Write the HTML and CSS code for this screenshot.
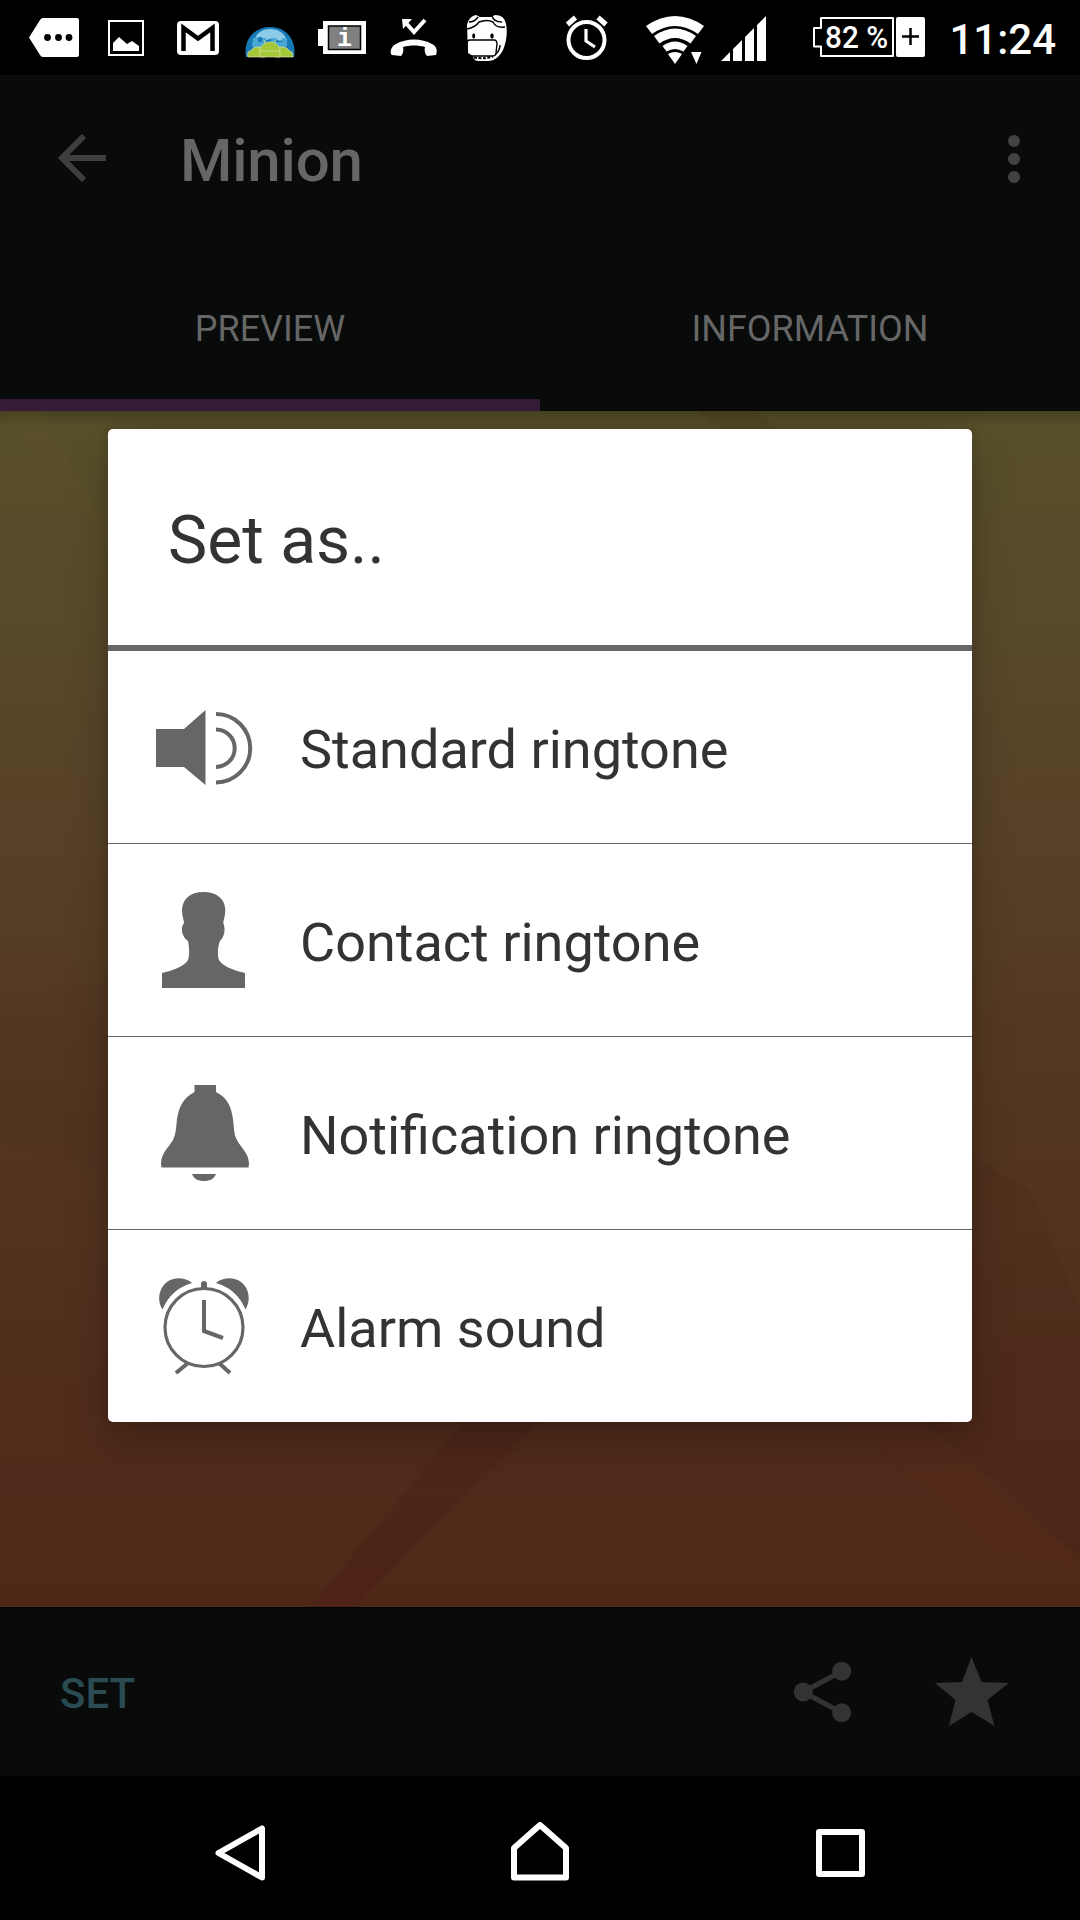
FILE: index.html
```html
<!DOCTYPE html>
<html lang="en">
<head>
    <meta charset="UTF-8">
    <meta name="viewport" content="width=device-width, initial-scale=1.0">
    <title>Minion</title>
    <link rel="stylesheet" href="styles.css">
</head>
<body>
    <div class="status-bar">
        <div class="notifications">
            <svg class="status-icon" viewBox="0 0 72 75">
                <path fill="#fff" d="M11 37.500 22 20q1-2 3-2h34q2 0 2 2v35q0 2-2 2H25q-2 0-3-2z"/>
                <circle cx="29.500" cy="37.500" r="3.400"/><circle cx="40.500" cy="37.500" r="3.400"/><circle cx="51" cy="37.500" r="3.400"/>
            </svg>
            <svg class="status-icon" viewBox="0 0 72 75">
                <rect x="19" y="21" width="34" height="34" fill="none" stroke="#fff" stroke-width="2"/>
                <path fill="#fff" d="M23 51V43l6-6 8 7 5-3 7 5v5z"/>
            </svg>
            <svg class="status-icon" viewBox="0 0 72 75">
                <rect x="15" y="21" width="42" height="34" rx="4" fill="#fff"/>
                <path fill="none" stroke="#000" stroke-width="4.500" d="M21.500 51V28L36 38.500 50.500 28v23"/>
            </svg>
            <svg class="status-icon" viewBox="0 0 72 75">
                <path fill="#1679b5" d="M12 57C9 40 20 27 36 27s27 13 24 30z"/>
                <path fill="#8dcce8" d="M21 38c3-6 8-9 15-9s13 3 16 9l-6 3-7-3-6 2-6-3z"/>
                <path fill="#4aa6d3" d="M19 38h5v4h4v-4h4v5h5v-5h5v4h6v-4h5v8l-6 4H22l-4-4z"/>
                <g fill="#a4c639" stroke="#e3f0bb" stroke-width=".6">
                    <path d="M14 57c-1-4 0-6 3-6 1-3 4-4 8-4s6 3 6 10zM41 57c0-7 2-10 6-10s7 1 8 4c3 0 4 2 4 6z"/>
                    <path d="M26 57v-7c1-5 5-8 10-8s9 3 10 8v7z"/>
                </g>
                <path fill="none" stroke="#c9df85" stroke-width="1" d="m30 40 2 3m10-3-2 3M26 51h20"/>
            </svg>
            <svg class="status-icon" viewBox="0 0 72 75">
                <path fill="#fff" d="M17 21h43v33H17v-8h-5V29h5z"/>
                <rect x="22.500" y="26" width="32" height="23.500" fill="#808080" stroke="#000" stroke-width="1.500"/>
                <text class="info-letter" x="38.500" y="45.500" text-anchor="middle">i</text>
            </svg>
            <svg class="status-icon" viewBox="0 0 72 75">
                <path fill="none" stroke="#fff" stroke-width="4" d="M28 23l8 9 11-12"/>
                <path fill="#fff" d="M24 19h10l-9 10z"/>
                <path fill="#fff" d="M13 54c-1-4 1-8 5-10 10-6 26-6 36 0 4 2 6 6 4 11l-9 1c-2-2-3-6-2-9-7-2-15-2-22 0 1 3 0 7-2 9l-9-1z"/>
            </svg>
            <svg class="status-icon" viewBox="0 0 72 75">
                <path fill="#fff" d="M17 25c1-5 4-9 9-10l4 2h11l4-2c6 0 10 3 11 9 2 9 0 19-3 26-3 6-8 11-15 11H28c-3 0-5-3-5-5l-5-3z"/>
                <g fill="none" stroke="#000" stroke-width="1.400">
                    <path d="M17 29c6-1 10-4 12-7 5-2 10-2 14 0 2 4 6 6 12 5M19 22c4 0 7-2 9-5M42 16c1 4 5 6 10 6"/>
                    <path d="M20 40h24c2 0 3 2 3 4l-1 9c0 2-2 3-4 3H21c-2 0-4-2-4-4V43c0-2 1-3 3-3z"/>
                    <path d="M50 45c0 4-2 7-4 9"/>
                    <path stroke-width="2" stroke-dasharray="3 1.500" d="M24 57.500c6 1 12 1 19-1"/>
                </g>
                <ellipse cx="23.700" cy="36" rx="1.500" ry="2.800"/><ellipse cx="42" cy="36" rx="1.700" ry="2.800"/>
            </svg>
        </div>
        <svg class="system-icons" viewBox="560 0 370 75">
            <g fill="none" stroke="#fff">
                <circle cx="586.500" cy="40" r="18" stroke-width="4"/>
                <path stroke-width="3.200" d="M586 29v12l9 6"/>
                <path stroke-width="5" d="m567.500 24.500 8-7M598 17.500l8 7"/>
            </g>
            <path fill="#fff" d="M646 26q29-20 58 0l-6 8q-23-16-46 0zM654 36q21-15 42 0l-5.500 7.500q-15.500-11-31 0zM662.500 46q12.500-9 25 0l-4 5.500q-8.500-5-17 0zM668 54q7-4 14 0l-7 10zM691 52h10.500l-5 12z"/>
            <path fill="#fff" d="M721 61l9-9v9zM733 61V49l9-9v21zM745 61V37l9-9v33zM757 61V25l9-9v45z"/>
            <path fill="none" stroke="#fff" stroke-width="2" stroke-linejoin="round" d="M821 18h72v38h-72v-9.500h-7V28h7z"/>
            <rect x="896" y="17" width="29" height="40" rx="2" fill="#fff"/>
            <path stroke="#000" stroke-width="2.500" d="M902 36.500h17M910.500 28v17"/>
            <text class="battery-level" x="825" y="48" textLength="63" lengthAdjust="spacingAndGlyphs">82 %</text>
        </svg>
        <div class="clock">11:24</div>
    </div>

    <div class="app-header">
        <div class="toolbar">
            <svg class="back" viewBox="0 0 48 48">
                <path d="M48 24H5M26 2 4 24l22 22" fill="none" stroke="#3e3e3e" stroke-width="6"/>
            </svg>
            <h1>Minion</h1>
            <svg class="more" viewBox="0 0 12 48" fill="#424242">
                <circle cx="6" cy="6" r="6"/><circle cx="6" cy="24" r="6"/><circle cx="6" cy="42" r="6"/>
            </svg>
        </div>
        <div class="tabs">
            <div class="tab active">PREVIEW</div>
            <div class="tab">INFORMATION</div>
        </div>
    </div>

    <div class="preview">
        <svg class="wallpaper" viewBox="0 0 1080 1196">
            <path fill="#301010" opacity=".08" d="M696 0h60l80 60h-70z"/>
            <path fill="#806030" opacity=".05" d="M0 0h40l80 140L40 50z"/>
            <path fill="#301010" opacity=".04" d="M0 590 120 565v200L0 730z"/>
            <path fill="#401010" opacity=".08" d="M960 740l68 37 52 120v250L925 1010z"/>
            <path fill="#401010" opacity=".16" d="M464 1010h78L354 1196h-44z"/>
            <path fill="#703020" opacity=".07" d="M845 1010h75l160 145-80-15z"/>
        </svg>
        <div class="dialog">
            <div class="dialog-title">Set as..</div>
            <div class="option">
                <svg viewBox="0 0 96 96">
                    <path fill="#666" d="M0 30h28l21.500-19v75L28 68H0z"/>
                    <path fill="none" stroke="#666" stroke-width="4" d="M60 15a34.200 34.200 0 0 1 0 68.400M60 30.500a18.700 18.700 0 0 1 0 37.400"/>
                </svg>
                <span>Standard ringtone</span>
            </div>
            <div class="option">
                <svg viewBox="0 0 96 96">
                    <path fill="#666" d="M47.500 0C61 0 69 7 69.300 18c0 6-2 10-2 13 2 5 2 13-3.300 18-2 4-3 14-1 19 3 6 16 11 26 13v15H6V81c10-2 23-7 26-13 2-5 1-15 0-19-6-4-8-13-4-18 0-3-2-7-2-13C26.500 7 34 0 47.500 0z"/>
                </svg>
                <span>Contact ringtone</span>
            </div>
            <div class="option">
                <svg viewBox="0 0 96 96">
                    <path fill="#666" d="M38.500 0H60v7c12 6 15 15 17 27 1 9 1 16 4 21 4 8 12 13 12 24l-.5 3.500h-87L5 79c0-11 8-17 12-24 3-6 3-12 4-21 2-12 6-21 17.500-27zM36 89h24c-2 5-6 7-12 7s-10-2-12-7z"/>
                </svg>
                <span>Notification ringtone</span>
            </div>
            <div class="option">
                <svg viewBox="0 0 96 96">
                    <path fill="#666" d="M36 5C29-1 18-1 11 4S0 21 6.500 31.500C12 18 22 9 36 5zM60 5c7-6 18-6 25-1s11 17 4.500 27.500C84 18 74 9 60 5z"/>
                    <g fill="none" stroke="#666">
                        <circle cx="48" cy="49.500" r="39" stroke-width="3.200"/>
                        <path stroke-width="4" d="M48 22v31l19 7M32 85 20 95M63 85l11 10"/>
                    </g>
                    <path fill="#666" d="M45 11V6q0-3 3-3t3 3v5z"/>
                </svg>
                <span>Alarm sound</span>
            </div>
        </div>
    </div>

    <div class="action-bar">
        <div class="set-button">SET</div>
        <svg class="share" viewBox="794 1662 58 60">
            <path d="M841.700 1671.300 803.300 1692l38.400 20.700" fill="none" stroke="#333" stroke-width="5"/>
            <g fill="#333"><circle cx="841.700" cy="1671.300" r="9.500"/><circle cx="803.300" cy="1692" r="9.500"/><circle cx="841.700" cy="1712.700" r="9.500"/></g>
        </svg>
        <svg class="star" viewBox="935 1657 74 69">
            <path fill="#333" d="M971.500 1657 981.500 1682 1008.500 1683 987.500 1700 994.500 1726 971.500 1712 949 1726 955.500 1700 935 1683 962 1682z"/>
        </svg>
    </div>

    <div class="nav-bar">
        <svg viewBox="0 0 60 60"><path d="M8.500 31 52 6.500v49z"/></svg>
        <svg viewBox="0 0 60 60"><path d="M4 26 30 3l26 23v29.500H4z"/></svg>
        <svg viewBox="0 0 60 60"><path d="M9 10h43v42H9z"/></svg>
    </div>
</body>
</html>
```

FILE: styles.css
```css
* {
    box-sizing: border-box;
}
body {
    margin: 0;
    width: 1080px;
    height: 1920px;
    display: flex;
    flex-direction: column;
    background-color: #000;
    font-family: Roboto, "Liberation Sans", sans-serif;
    overflow: hidden;
}
svg {
    display: block;
    flex-shrink: 0;
}
.status-bar {
    height: 75px;
    display: flex;
    align-items: center;
    padding: 0 24px 0 18px;
    color: white;
}
.notifications {
    display: flex;
    margin-right: 38px;
}
.status-icon {
    width: 72px;
    height: 75px;
}
.info-letter {
    font: bold 25px "Liberation Mono", monospace;
    fill: white;
}
.system-icons {
    width: 370px;
    height: 75px;
}
.battery-level {
    font-size: 32px;
    font-weight: 500;
    fill: white;
}
.clock {
    flex: 1;
    text-align: right;
    font-size: 42px;
    font-weight: 500;
    line-height: 50px;
    padding-top: 5px;
}
.app-header {
    height: 336px;
    background-color: #080b0a;
    color: #666;
}
.toolbar {
    height: 192px;
    padding: 0 60px 26px 58px;
    display: flex;
    align-items: center;
}
.back {
    width: 48px;
    height: 48px;
}
.toolbar h1 {
    flex: 1;
    margin: 6px 0 0 74px;
    font-size: 60px;
    font-weight: 500;
    line-height: 70px;
    letter-spacing: -0.2px;
}
.more {
    width: 12px;
    height: 48px;
    margin-top: 2px;
}
.tabs {
    display: flex;
    height: 144px;
}
.tab {
    flex: 1;
    padding-top: 41px;
    text-align: center;
    font-size: 36px;
    line-height: 42px;
}
.tab.active {
    border-bottom: 12px solid #361b36;
}
.preview {
    position: relative;
    height: 1196px;
    padding-top: 18px;
    background: linear-gradient(#575029 0%, #58482a 20%, #573f27 38%, #533720 56%, #512d1c 80%, #502818 100%);
    overflow: hidden;
}
.preview::before {
    content: "";
    position: absolute;
    top: 0;
    left: 0;
    right: 0;
    height: 16px;
    background: linear-gradient(rgba(0, 0, 0, 0.2), transparent);
}
.wallpaper {
    position: absolute;
    top: 0;
    left: 0;
    width: 1080px;
    height: 1196px;
}
.dialog {
    position: relative;
    width: 864px;
    margin: 0 auto;
    background-color: white;
    border-radius: 5px;
    color: #333;
    box-shadow: 0 20px 44px rgba(0, 0, 0, 0.22), 0 0 12px rgba(0, 0, 0, 0.12);
}
.dialog-title {
    height: 222px;
    padding-left: 60px;
    border-bottom: 6px solid #666;
    font-size: 66px;
    line-height: 224px;
}
.option {
    display: flex;
    align-items: center;
    gap: 48px;
    height: 193px;
    padding-left: 48px;
    border-bottom: 1px solid #666;
    font-size: 54px;
}
.option:last-child {
    height: 192px;
    border-bottom: none;
}
.option svg {
    width: 96px;
    height: 96px;
    overflow: visible;
}
.option span {
    padding-top: 4px;
}
.action-bar {
    height: 169px;
    display: flex;
    align-items: center;
    padding: 0 71px 0 60px;
    background-color: #080b0a;
    border-top: 1px solid #000;
}
.set-button {
    flex: 1;
    padding-top: 3px;
    color: #2b4b52;
    font-size: 42px;
    font-weight: 500;
}
.share {
    width: 58px;
    height: 60px;
    margin-right: 83px;
}
.star {
    width: 74px;
    height: 69px;
    margin-top: -2px;
}
.nav-bar {
    height: 144px;
    display: flex;
    justify-content: space-between;
    padding: 46px 210px 0;
}
.nav-bar svg {
    width: 60px;
    height: 60px;
    fill: none;
    stroke: white;
    stroke-width: 6;
    stroke-linejoin: round;
}
```
